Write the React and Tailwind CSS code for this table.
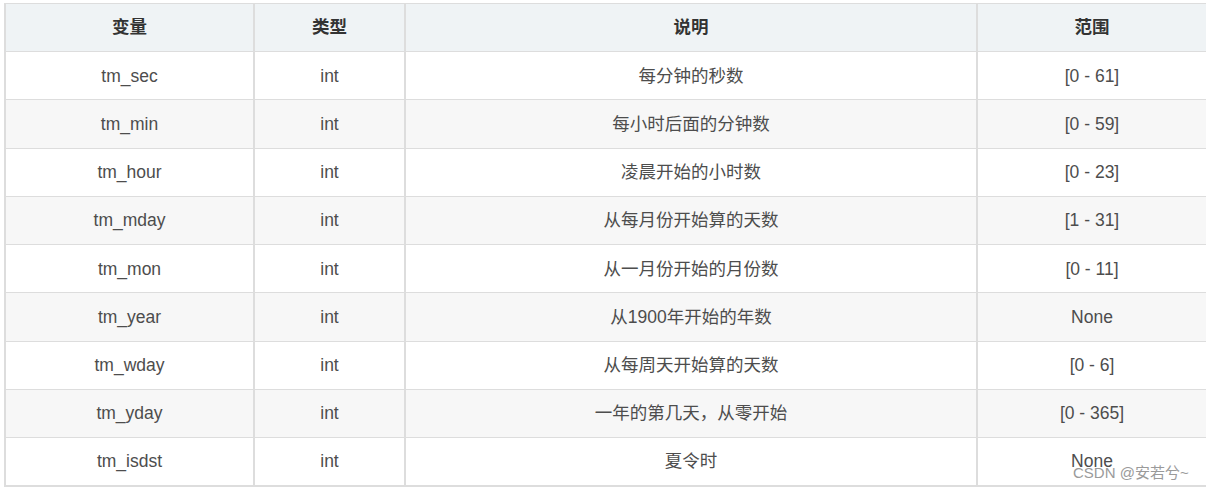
import React from "react";

const rows = [
  ["tm_sec", "int", "每分钟的秒数", "[0 - 61]"],
  ["tm_min", "int", "每小时后面的分钟数", "[0 - 59]"],
  ["tm_hour", "int", "凌晨开始的小时数", "[0 - 23]"],
  ["tm_mday", "int", "从每月份开始算的天数", "[1 - 31]"],
  ["tm_mon", "int", "从一月份开始的月份数", "[0 - 11]"],
  ["tm_year", "int", "从1900年开始的年数", "None"],
  ["tm_wday", "int", "从每周天开始算的天数", "[0 - 6]"],
  ["tm_yday", "int", "一年的第几天，从零开始", "[0 - 365]"],
  ["tm_isdst", "int", "夏令时", "None"],
];

const font = { fontFamily: '"Liberation Sans", Arial, "Noto Sans CJK SC", sans-serif' };

export default function App() {
  return (
    <div className="relative w-[1206px] h-[490px] bg-white pt-[3px] pl-[4px]" style={font}>
      <table className="border-collapse table-fixed w-[1202px] text-[17.5px] text-[#4d4d4d]">
        <colgroup>
          <col className="w-[249px]" />
          <col className="w-[151px]" />
          <col className="w-[572px]" />
          <col className="w-[230px]" />
        </colgroup>
        <thead>
          <tr className="h-[48px] bg-[#eff3f5]">
            {["变量", "类型", "说明", "范围"].map((h) => (
              <th key={h} className="border-x-2 border-y border-[#dddddd] font-bold text-[#333333] text-center p-0">
                {h}
              </th>
            ))}
          </tr>
        </thead>
        <tbody>
          {rows.map((r, i) => (
            <tr key={r[0]} className={i % 2 === 1 ? "h-[48.25px] bg-[#f7f7f7]" : "h-[48.25px] bg-white"}>
              {r.map((c, j) => (
                <td key={j} className={i === 8 ? "border-x-2 border-t border-b-2 border-[#dddddd] text-center p-0" : "border-x-2 border-y border-[#dddddd] text-center p-0"}>
                  {c}
                </td>
              ))}
            </tr>
          ))}
        </tbody>
      </table>
      <div className="absolute left-[1073px] top-[465px] text-[15px] text-[#9a9a9a] leading-none" style={font}>
        CSDN @安若兮~
      </div>
    </div>
  );
}
